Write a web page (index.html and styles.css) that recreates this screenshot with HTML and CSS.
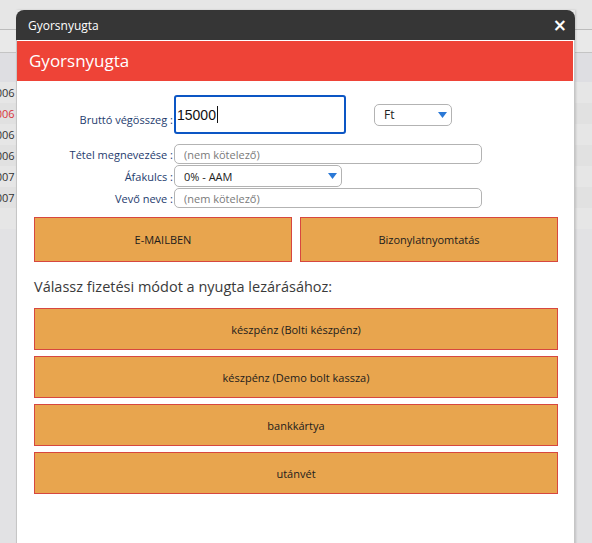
FILE: index.html
```html
<!DOCTYPE html>
<html lang="hu">
<head>
    <meta charset="UTF-8">
    <meta name="viewport" content="width=device-width, initial-scale=1.0">
    <title>Gyorsnyugta</title>
    <link rel="stylesheet" href="styles.css">
</head>
<body>

<!-- page behind the dialog -->
<div class="page">
    <div class="page-top"></div>
    <div class="page-toolbar"></div>
    <div class="page-head"></div>
    <div class="rows">
        <div class="row">2023-006</div>
        <div class="row row-alt storno">2023-006</div>
        <div class="row">2023-006</div>
        <div class="row row-alt">2023-006</div>
        <div class="row">2023-007</div>
        <div class="row row-alt">2023-007</div>
        <div class="row"></div>
    </div>
</div>

<div class="dialog">
    <div class="dialog-title">
        <span>Gyorsnyugta</span>
        <button class="dialog-close">&times;</button>
    </div>
    <div class="dialog-body">
        <h1 class="receipt-head">Gyorsnyugta</h1>

        <div class="receipt-form">
            <label class="form-label" for="brutto">Bruttó végösszeg :</label>
            <div class="amount-line">
                <div class="amount-wrap">
                    <input class="amount-input" id="brutto" type="text" value="15000" autofocus>
                    <span class="caret"></span>
                </div>
                <div class="select-wrap currency">
                    <select class="select-box">
                        <option>Ft</option>
                        <option>EUR</option>
                    </select>
                    <svg class="select-arrow" width="9" height="6" viewBox="0 0 9 6"><path d="M0 0h9L4.5 6z" fill="#2a78d6"/></svg>
                </div>
            </div>

            <label class="form-label" for="tetel">Tétel megnevezése :</label>
            <input class="text-input wide" id="tetel" type="text" placeholder="(nem kötelező)">

            <label class="form-label" for="afa">Áfakulcs :</label>
            <div class="select-wrap vat">
                <select class="select-box" id="afa">
                    <option>0% - AAM</option>
                    <option>5%</option>
                    <option>27%</option>
                </select>
                <svg class="select-arrow" width="9" height="6" viewBox="0 0 9 6"><path d="M0 0h9L4.5 6z" fill="#2a78d6"/></svg>
            </div>

            <label class="form-label" for="vevo">Vevő neve :</label>
            <input class="text-input wide" id="vevo" type="text" placeholder="(nem kötelező)">
        </div>

        <div class="action-row">
            <button class="action-btn">E-MAILBEN</button>
            <button class="action-btn">Bizonylatnyomtatás</button>
        </div>

        <p class="pay-title">Válassz fizetési módot a nyugta lezárásához:</p>

        <div class="pay-list">
            <button class="action-btn pay-btn">készpénz (Bolti készpénz)</button>
            <button class="action-btn pay-btn">készpénz (Demo bolt kassza)</button>
            <button class="action-btn pay-btn">bankkártya</button>
            <button class="action-btn pay-btn">utánvét</button>
        </div>
    </div>
</div>

</body>
</html>
```

FILE: styles.css
```css
body {
    margin: 0;
    background-color: #e2e2e4;
    font-family: 'Open Sans', sans-serif;
    height: 543px;
    overflow: hidden;
}

/* the list page under the modal */
.page-top {
    height: 29px;
    background-color: #e6e6e6;
    border-bottom: 1px solid #bcbcbc;
}
.page-toolbar {
    height: 22px;
    background-color: #e9e9e9;
    border-bottom: 1px solid #c4c4c4;
}
.page-head {
    height: 29px;
    background-color: #dedee2;
}
.rows {
    font-family: 'Open Sans', sans-serif;
    font-size: 11px;
    color: #333;
}
.row {
    height: 21px;
    line-height: 21px;
    margin-left: -33px;
    background-color: #e6e6e6;
}
.row-alt {
    background-color: #e1e1e1;
}
.storno {
    color: #d9333a;
}

/* modal window */
.dialog {
    position: absolute;
    left: 16px;
    top: 10px;
    width: 559px;
    height: 560px;
    box-shadow: 1px 0 2px rgba(0,0,0,0.15);
}
.dialog-title {
    height: 30px;
    background-color: #363636;
    border-radius: 8px 8px 0 0;
    display: flex;
    align-items: center;
    justify-content: space-between;
    padding: 0 8px 0 12px;
    color: white;
    font-size: 12px;
}
.dialog-title span {
    margin-top: 1px;
}
.dialog-close {
    background: none;
    border: none;
    color: white;
    font-size: 17px;
    font-weight: 700;
    line-height: 1;
    padding: 0;
    cursor: pointer;
    font-family: 'DejaVu Sans', sans-serif;
}
.dialog-body {
    background-color: white;
    border-left: 1px solid #c6c6c6;
    border-right: 1px solid #c6c6c6;
    padding: 1px 1px 0 0;
    height: 529px;
}
.receipt-head {
    margin: 0;
    height: 40px;
    line-height: 40px;
    background-color: #ee4337;
    color: white;
    font-size: 17px;
    font-weight: 400;
    padding-left: 12px;
}

/* form */
.receipt-form {
    display: grid;
    grid-template-columns: 156px auto;
    column-gap: 1px;
    row-gap: 1px;
    align-items: center;
    margin-top: 14px;
}
.form-label {
    text-align: right;
    font-size: 11px;
    color: #1e3c6e;
    white-space: nowrap;
}
.amount-line {
    display: flex;
    align-items: center;
    gap: 28px;
    margin-bottom: 9px;
}
.amount-wrap {
    position: relative;
}
.amount-input {
    display: block;
    width: 172px;
    height: 39px;
    box-sizing: border-box;
    border: 2px solid #0c56c4;
    border-radius: 3px;
    outline: none;
    font-family: 'Liberation Sans', Arial, sans-serif;
    font-size: 14px;
    color: #111;
    padding: 0 1px;
    caret-color: transparent;
}
/* text cursor drawn after the typed amount */
.caret {
    position: absolute;
    left: 43px;
    top: 11px;
    width: 1px;
    height: 17px;
    background-color: #111;
}
.text-input {
    height: 20px;
    box-sizing: border-box;
    border: 1px solid #b3b3b3;
    border-radius: 5px;
    font-family: 'Open Sans', sans-serif;
    font-size: 11px;
    padding: 0 9px;
    margin: 0;
    outline: none;
}
.text-input::placeholder {
    color: #7a7a7a;
}
.wide {
    width: 308px;
}
.select-wrap {
    position: relative;
    height: 22px;
}
.select-box {
    appearance: none;
    -webkit-appearance: none;
    display: block;
    width: 100%;
    height: 22px;
    box-sizing: border-box;
    border: 1px solid #b3b3b3;
    border-radius: 5px;
    background-color: white;
    font-family: 'Open Sans', sans-serif;
    font-size: 11px;
    color: #222;
    padding: 0 9px;
    outline: none;
}
.select-arrow {
    position: absolute;
    right: 5px;
    top: 8px;
    pointer-events: none;
}
.currency {
    width: 78px;
}
.currency .select-box {
    font-size: 12px;
}
.vat {
    width: 168px;
}

/* buttons */
.action-row {
    display: flex;
    gap: 8px;
    padding: 0 15px 0 17px;
    margin-top: 9px;
}
.action-btn {
    flex: 1;
    height: 45px;
    background-color: #e8a54e;
    border: 1px solid #d7473f;
    font-family: 'Open Sans', sans-serif;
    font-size: 11px;
    color: #1c1c1c;
    cursor: pointer;
}
.pay-title {
    margin: 15px 0 0 17px;
    font-size: 14.5px;
    color: #3a3a3a;
}
.pay-list {
    display: flex;
    flex-direction: column;
    gap: 6px;
    padding: 0 15px 0 17px;
    margin-top: 12px;
}
.pay-btn {
    flex: none;
    height: 42px;
}
```
